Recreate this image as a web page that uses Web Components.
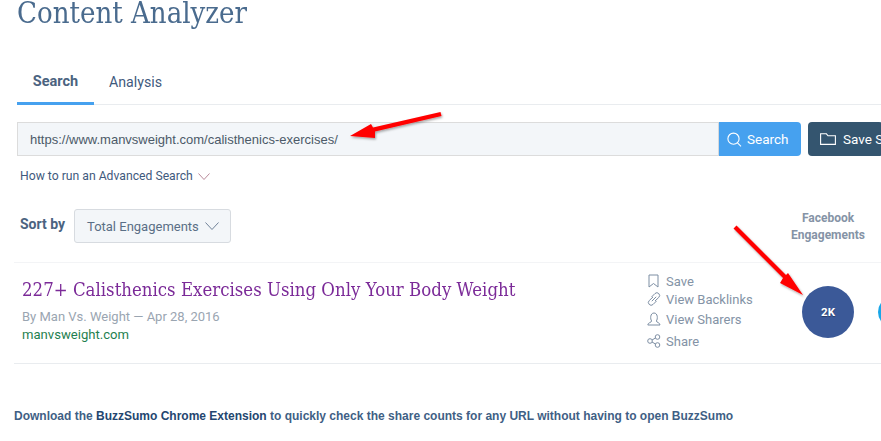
<!DOCTYPE html>
<html><head><meta charset="utf-8"><style>
html,body{margin:0;padding:0;background:#fff;overflow:hidden;width:881px;height:441px}
body{position:relative;font-family:Roboto,sans-serif}
</style></head><body>
<app-page></app-page>
<script>
const def=(n,html)=>customElements.define(n,class extends HTMLElement{constructor(){super();this.attachShadow({mode:'open'}).innerHTML=html;}});
const chev=(w,h,c)=>`<svg width="${w}" height="${h}" viewBox="0 0 ${w} ${h}" fill="none" stroke="${c}" stroke-width="1"><path d="M.5 .5L${w/2} ${h-.5}L${w-.5} .5"/></svg>`;
def('page-title',`<style>:host{display:block;height:20px;margin:0 0 0 17px;font:300 30px/26px "DejaVu Serif",serif;color:#4a6b8e;white-space:nowrap}
span{display:inline-block;transform-origin:0 50%;transform:scaleX(.87)}</style><span><slot></slot></span>`);
def('tab-bar',`<style>:host{display:flex;margin:43px 0 0 17px;width:864px;height:41px;border-bottom:1px solid #e9ecef;font:14.5px Roboto,sans-serif;color:#3f5a7d}
.t{height:41px;display:flex;align-items:center;justify-content:center;box-sizing:border-box;padding-bottom:3px}
.a{width:77px;font-weight:700;color:#4b6380;border-bottom:3px solid #46a1ef;height:42px;padding-bottom:3px}
.b{width:83px;font-size:14.2px}</style><div class="t a">Search</div><div class="t b">Analysis</div>`);
def('search-row',`<style>:host{display:flex;margin:17px 0 0 17px;width:900px;height:34px;font:13.5px Roboto,sans-serif}
.in{flex:none;width:702px;box-sizing:border-box;background:#f3f6f9;border:1px solid #dcdcdc;border-right:1px solid #d4d8dc;padding-left:12px;display:flex;align-items:center;color:#4c5a68;font:13px "Liberation Sans",Arial,sans-serif}
.btn{flex:none;display:flex;align-items:center;color:#fff;border-radius:0 4px 4px 0;background:#46a1ef;width:82px;box-sizing:border-box;padding-left:8px;gap:5px}
.sv{margin-left:7px;background:#34556f;border-radius:4px;width:75px;padding-left:12px;gap:7px;overflow:hidden;white-space:nowrap}</style>
<div class="in">https://www.manvsweight.com/calisthenics-exercises/</div>
<div class="btn"><svg width="15" height="15" viewBox="0 0 15 15" fill="none" stroke="#fff" stroke-width="1.1"><circle cx="6.5" cy="6.7" r="5.6"/><path d="M10.5 10.8L14 14.3"/></svg>Search</div>
<div class="btn sv"><svg width="16" height="12" viewBox="0 0 16 12" fill="none" stroke="#fff" stroke-width="1.1" style="flex:none"><path d="M.6 11.4V.8H6.4L8 2.8H15.4V11.4Z"/></svg>Save Search</div>`);
def('adv-link',`<style>:host{display:flex;align-items:center;gap:5px;margin:11px 0 0 20px;height:18px;font:12.2px Roboto,sans-serif;color:#3f5a7d}</style><slot></slot>${chev(12,7,'#b98a9a')}`);
def('sort-row',`<style>:host{display:flex;align-items:center;margin:24px 0 0 20px;height:34px;width:880px;font:14px Roboto,sans-serif}
b{font-weight:700;color:#4b6380;width:54px;position:relative;top:-2px}
.s{flex:none;display:flex;align-items:center;gap:6px;box-sizing:border-box;width:157px;height:34px;background:#f3f6f9;border:1px solid #d7dbe0;border-radius:3px;padding-left:12px;color:#5a6f86;font-size:13px}
.h{flex:none;margin:2px 0 0 537px;width:120px;text-align:center;font:700 12px/17.5px Roboto,sans-serif;color:#8593a6}</style>
<b>Sort by</b><div class="s">Total Engagements${chev(14,8,'#6f8198')}</div><div class="h"><slot></slot></div>`);
const ic={
save:'<path d="M2 1H11V13L6.5 9.5L2 13Z"/>',
link:'<path d="M6 5L2.300 8.500A2.700 2.700 0 0 0 6 12.500L9.500 9M8 9L11.700 5.500A2.700 2.700 0 0 0 8 1.500L4.500 5M4.800 9.200L9.200 4.800"/>',
user:'<path d="M.8 13H13C13 10.500 9.500 10.500 9.300 9C11 7 10.800 1 7 1S3 7 4.700 9C4.500 10.500 .8 10.500 .8 13Z"/>',
share:'<circle cx="3" cy="7" r="2.300"/><circle cx="10.500" cy="3" r="2.300"/><circle cx="10.500" cy="11" r="2.300"/><path d="M5 6L8.500 4M5 8L8.500 10"/>'};
const act=(k,t,h)=>`<div class="r" style="height:${h}px"><svg width="14" height="14" viewBox="0 0 14 14" fill="none" stroke="#7d8ea3" stroke-width="1">${ic[k]}</svg>${t}</div>`;
def('result-row',`<style>:host{display:grid;grid-template-columns:633px 155px 52px;margin:19px 0 0 14px;width:867px;height:102px;box-sizing:border-box;border-top:1px solid #f3f4f6;border-bottom:1px solid #e9ecef;position:relative}
.m{padding:13px 0 0 8px}
h3{margin:0;font:400 18.6px/28px "DejaVu Serif",serif;color:#7b2a98;white-space:nowrap;transform-origin:0 50%;transform:scaleX(.893);height:28px}
.by{margin-top:4px;font:13px/17px Roboto,sans-serif;color:#9aa5b1;white-space:nowrap}
.d{font:13.1px/17px Roboto,sans-serif;color:#1f7f4f;margin-top:1px}
.act{padding-top:9px;font:13px Roboto,sans-serif;color:#8493a6}
.r{display:flex;align-items:center;gap:5px}
.c{width:52px;height:52px;border-radius:50%;background:#3b5998;color:#fff;font:700 11.5px Roboto,sans-serif;display:flex;align-items:center;justify-content:center;margin-top:23px;text-shadow:0 1px 1px #0005}
.tw{position:absolute;left:864px;top:33px;width:32px;height:32px;border-radius:50%;background:#18a6e8}
</style>
<div class="m"><h3>227+ Calisthenics Exercises Using Only Your Body Weight</h3>
<div class="by">By Man Vs. Weight — Apr 28, 2016</div><div class="d">manvsweight.com</div></div>
<div class="act">${act('save','Save',18)}${act('link','View Backlinks',18)}${act('user','View Sharers',22)}${act('share','Share',22)}</div>
<div class="c">2K</div><div class="tw"></div>`);
def('ext-note',`<style>:host{display:block;margin:45px 0 0 14px;font:700 12px/14px "Liberation Sans",Arial,sans-serif;color:#3f5f85;white-space:nowrap}b{color:#24466f}</style>Download the <b>BuzzSumo Chrome Extension</b> to quickly check the share counts for any URL without having to open BuzzSumo`);
def('red-arrows',`<style>:host{position:absolute;inset:0;pointer-events:none}svg{display:block}</style>
<svg width="881" height="441" viewBox="0 0 881 441">
<defs><filter id="f" x="-20%" y="-20%" width="140%" height="140%"><feDropShadow dx="1" dy="1.500" stdDeviation="1" flood-color="#000" flood-opacity=".35"/></filter></defs>
<g filter="url(#f)" fill="#f00"><path d="M440.500 112L441.500 116L375 131.500L375 138L350 136L371 124L373 127.500Z"/>
<path d="M733.500 228.500L736.500 225.500L786 275L788 273L803 295L780 283L783 278Z"/></g></svg>`);
def('app-page',`<style>:host{display:block;width:881px;height:441px;overflow:hidden;position:relative}</style>
<page-title>Content Analyzer</page-title><tab-bar></tab-bar><search-row></search-row><adv-link>How to run an Advanced Search</adv-link><sort-row>Facebook<br>Engagements</sort-row>
<result-row></result-row><ext-note></ext-note><red-arrows></red-arrows>`);
</script></body></html>
